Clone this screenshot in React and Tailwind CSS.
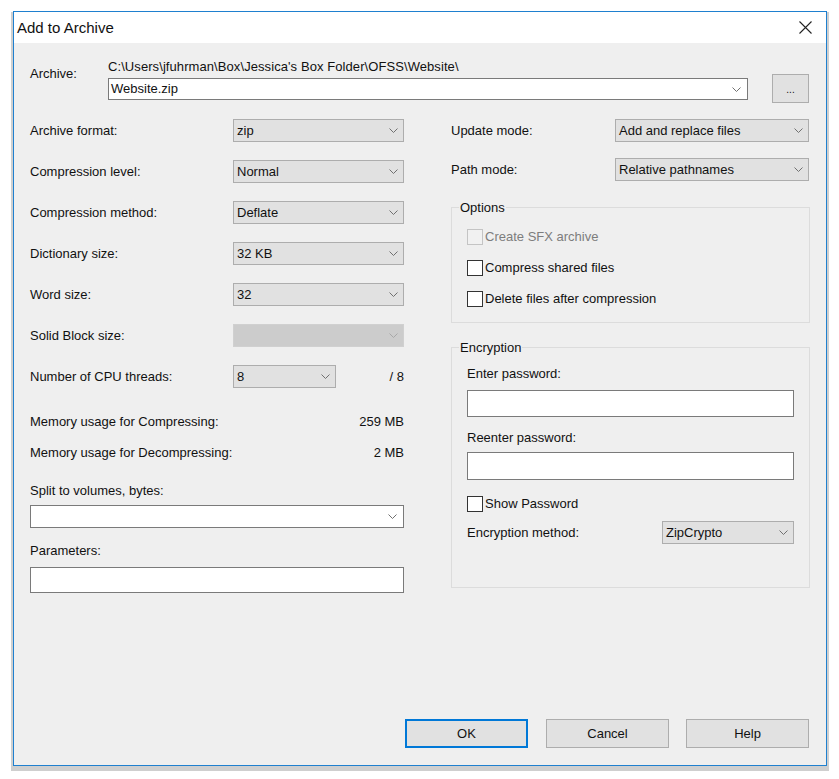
import React from "react";

function Chevron({ color = "#707070" }) {
  return (
    <svg width="9" height="5" viewBox="0 0 9 5" fill="none">
      <path d="M0.5 0.5 L4.5 4.5 L8.5 0.5" stroke={color} strokeWidth="1" />
    </svg>
  );
}

function Combo({ value, className = "", disabled = false }) {
  return (
    <div
      className={
        "flex h-[23px] items-center justify-between border pl-[3px] pr-[5px] text-[#111] " +
        (disabled ? "border-[#d0d0d0] bg-[#cccccc] " : "border-[#adadad] bg-[#e1e1e1] ") +
        className
      }
    >
      <span>{value}</span>
      <Chevron color={disabled ? "#a8a8a8" : "#707070"} />
    </div>
  );
}

function Row({ label, children, mt = "mt-[18px]" }) {
  return (
    <div className={"flex h-[23px] items-center justify-between " + mt}>
      <span>{label}</span>
      {children}
    </div>
  );
}

function Check({ label, disabled = false, mt }) {
  return (
    <div className={"flex h-[16px] items-center gap-[2px] " + mt}>
      <div className={"h-[16px] w-[16px] border " + (disabled ? "border-[#c4c4c4] bg-[#f1f1f1]" : "border-[#333] bg-white")} />
      <span className={disabled ? "text-[#7d7d7d]" : ""}>{label}</span>
    </div>
  );
}

function Btn({ children, primary, className = "" }) {
  return (
    <div
      className={
        "flex h-[29px] w-[123px] items-center justify-center bg-[#e1e1e1] " +
        (primary ? "border-2 border-[#0078d7] " : "border border-[#adadad] ") +
        className
      }
    >
      {children}
    </div>
  );
}

function Group({ title, className, children }) {
  return (
    <div className={"relative border border-[#dcdcdc] px-[15px] " + className}>
      <span className="absolute -top-[8px] left-[7px] bg-[#efefef] px-[1px] leading-[16px]">{title}</span>
      {children}
    </div>
  );
}

export default function App() {
  return (
    <div
      className="min-h-[779px] bg-white pl-[13px] pt-[11px] text-[13px] leading-[16px] text-[#111]"
      style={{ fontFamily: '"Liberation Sans", Arial, sans-serif' }}
    >
      <div className="flex h-[755px] w-[814px] flex-col border border-[#1f80cf] bg-[#efefef] shadow-[0_3px_0_2px_#cfcfcf]">
        <div className="flex h-[31px] shrink-0 items-center justify-between bg-white pl-[3px] pr-[14px]">
          <span className="text-[15px] text-[#111]">Add to Archive</span>
          <svg width="13" height="13" viewBox="0 0 13 13" fill="none">
            <path d="M0.5 0.5 L12.5 12.5 M12.5 0.5 L0.5 12.5" stroke="#222" strokeWidth="1.1" />
          </svg>
        </div>

        <div className="flex flex-1 flex-col pl-[16px] pr-[17px]">
          <div className="flex h-[61px] shrink-0 items-start">
            <span className="mt-[23px] w-[78px]">Archive:</span>
            <div className="w-[640px] pt-[16px]">
              <div className="h-[16px] tracking-[0.08px]">C:\Users\jfuhrman\Box\Jessica's Box Folder\OFSS\Website\</div>
              <div className="mt-[3px] flex h-[22px] items-center justify-between border border-[#7a7a7a] bg-white pl-[2px] pr-[6px]">
                <span>Website.zip</span>
                <Chevron />
              </div>
            </div>
            <div className="ml-[24px] mt-[31px] flex h-[29px] w-[37px] items-center justify-center border border-[#adadad] bg-[#e1e1e1] pt-[3px] text-[10px]">...</div>
          </div>

          <div className="mt-[15px] flex flex-1 items-start">
            <div className="w-[374px] shrink-0">
              <Row label="Archive format:" mt="mt-0"><Combo value="zip" className="w-[171px]" /></Row>
              <Row label="Compression level:"><Combo value="Normal" className="w-[171px]" /></Row>
              <Row label="Compression method:"><Combo value="Deflate" className="w-[171px]" /></Row>
              <Row label="Dictionary size:"><Combo value="32 KB" className="w-[171px]" /></Row>
              <Row label="Word size:"><Combo value="32" className="w-[171px]" /></Row>
              <Row label="Solid Block size:"><Combo value="" disabled className="w-[171px]" /></Row>
              <Row label="Number of CPU threads:">
                <div className="flex w-[171px] items-center justify-between">
                  <Combo value="8" className="w-[103px]" />
                  <span>/ 8</span>
                </div>
              </Row>
              <div className="mt-[26px] flex h-[16px] justify-between"><span>Memory usage for Compressing:</span><span>259 MB</span></div>
              <div className="mt-[15px] flex h-[16px] justify-between"><span>Memory usage for Decompressing:</span><span>2 MB</span></div>
              <div className="mt-[22px] h-[16px]">Split to volumes, bytes:</div>
              <div className="mt-[6px] flex h-[23px] items-center justify-end border border-[#7a7a7a] bg-white pr-[6px]"><Chevron /></div>
              <div className="mt-[15px] h-[16px]">Parameters:</div>
              <div className="mt-[8px] h-[26px] border border-[#7a7a7a] bg-white" />
            </div>

            <div className="ml-[47px] w-[359px] shrink-0">
              <div className="flex h-[23px] items-center justify-between pr-[1px]">
                <span>Update mode:</span>
                <Combo value="Add and replace files" className="w-[194px]" />
              </div>
              <div className="mt-[16px] flex h-[23px] items-center justify-between pr-[1px]">
                <span>Path mode:</span>
                <Combo value="Relative pathnames" className="w-[194px]" />
              </div>

              <Group title="Options" className="mt-[26px] h-[116px] pt-[21px]">
                <Check label="Create SFX archive" disabled />
                <Check label="Compress shared files" mt="mt-[15px]" />
                <Check label="Delete files after compression" mt="mt-[15px]" />
              </Group>

              <Group title="Encryption" className="mt-[24px] h-[241px] pt-[18px]">
                <div className="h-[16px]">Enter password:</div>
                <div className="mt-[8px] h-[27px] w-[327px] border border-[#7a7a7a] bg-white" />
                <div className="mt-[13px] h-[16px]">Reenter password:</div>
                <div className="mt-[6px] h-[28px] w-[327px] border border-[#7a7a7a] bg-white" />
                <Check label="Show Password" mt="mt-[16px]" />
                <div className="mt-[9px] flex h-[23px] w-[327px] items-center justify-between">
                  <span>Encryption method:</span>
                  <Combo value="ZipCrypto" className="w-[132px]" />
                </div>
              </Group>
            </div>
          </div>

          <div className="mb-[17px] flex shrink-0 justify-end">
            <Btn primary>OK</Btn>
            <Btn className="ml-[18px]">Cancel</Btn>
            <Btn className="ml-[17px]">Help</Btn>
          </div>
        </div>
      </div>
    </div>
  );
}
